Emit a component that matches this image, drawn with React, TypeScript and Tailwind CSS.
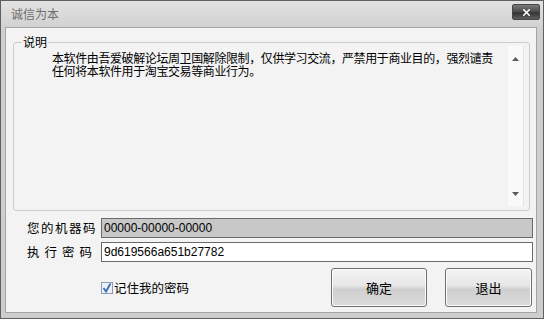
import { X } from 'lucide-react'

const cjk = { fontFamily: '"Noto Sans CJK SC", "Noto Sans", sans-serif' }

function Arrow({ up }: { up?: boolean }) {
  return (
    <svg width="7" height="4" viewBox="0 0 7 4">
      <polygon points={up ? '0,4 7,4 3.5,0' : '0,0 7,0 3.5,4'} fill="#5a5a5a" />
    </svg>
  )
}

function Button({ label, w }: { label: string; w: string }) {
  return (
    <button
      className={`${w} h-[39px] rounded-[3px] border border-[#707070] bg-[linear-gradient(#f4f4f4_0%,#e6e6e6_45%,#cfcfcf_55%,#dcdcdc_100%)] text-[13px] text-black shadow-[inset_0_0_0_1px_#fbfbfb]`}
    >
      {label}
    </button>
  )
}

export default function App() {
  return (
    <div
      className="w-[544px] h-[319px] flex flex-col border border-[#5f5f5f] bg-[linear-gradient(#e2e2e2,#cfcfcf_30px,#cdcdcd)] text-[12px] text-black"
      style={cjk}
    >
      <div className="h-[26px] flex items-start justify-between">
        <span className="pl-[10px] pt-[6px] leading-[14px] text-[12px] text-[#6f6f6f]">诚信为本</span>
        <div className="mt-[3px] mr-[3px] w-[28px] h-[16px] flex items-center justify-center rounded-[2px] border border-[#474747] bg-[linear-gradient(#7a7a7a,#4a4a4a_50%,#333_55%,#5e5e5e)]">
          <X className="w-[11px] h-[11px] text-white" strokeWidth={3.5} />
        </div>
      </div>

      <div className="flex-1 ml-[4px] mr-[6px] mb-[5px] flex flex-col border border-[#a5a5a5] bg-[#f3f3f3]">
        <div className="relative mt-[14px] ml-[7px] mr-[6px] h-[169px] flex border border-[#cccccc] rounded-[3px] pt-[3px] pb-[4px] pr-[5px]">
          <span className="absolute left-[8px] -top-[8px] px-[1px] leading-[14px] text-[12px] bg-[#f3f3f3]">说明</span>
          <p className="flex-1 pl-[38px] pt-[5px] leading-[13px] whitespace-nowrap text-[12px] tracking-[-0.4px]">
            本软件由吾爱破解论坛周卫国解除限制，仅供学习交流，严禁用于商业目的，强烈谴责
            <br />
            任何将本软件用于淘宝交易等商业行为。
          </p>
          <div className="w-[16px] flex flex-col items-center justify-between bg-[#f9f9f9] border-r border-[#e4e4e4] pt-[11px] pb-[10px]">
            <Arrow up />
            <Arrow />
          </div>
        </div>

        <div className="mt-[7px] flex items-center h-[20px]">
          <span className="ml-[21px] w-[74px] tracking-[1.5px] text-[12.5px]">您的机器码</span>
          <div
            className="mr-[3px] flex-1 h-[20px] border border-[#6a6a6a] bg-[#c8c8c8] px-[2px] leading-[18px] text-[12px]"
            style={{ fontFamily: '"Liberation Sans", sans-serif' }}
          >
            00000-00000-00000
          </div>
        </div>

        <div className="mt-[4px] flex items-center h-[20px]">
          <span className="ml-[21px] w-[65px] flex justify-between text-[12.5px]">
            <span>执</span>
            <span>行</span>
            <span>密</span>
            <span>码</span>
          </span>
          <div
            className="ml-[9px] mr-[3px] flex-1 h-[20px] border border-[#6a6a6a] bg-white px-[2px] leading-[18px] text-[12px]"
            style={{ fontFamily: '"Liberation Sans", sans-serif' }}
          >
            9d619566a651b27782
          </div>
        </div>

        <div className="mt-[6px] flex items-center h-[39px]">
          <div className="ml-[95px] flex items-center gap-[1px] pt-[1px]">
            <svg width="12" height="12" viewBox="0 0 12 12">
              <rect x="0.5" y="0.5" width="11" height="11" fill="#eef2f8" stroke="#8a9bb5" />
              <path d="M2.5 6 L5 9.5 L9.5 1.5" fill="none" stroke="#3c6bb3" strokeWidth="1.8" />
            </svg>
            <span className="text-[12.5px]">记住我的密码</span>
          </div>
          <div className="ml-auto mr-[4px] flex gap-[18px]">
            <Button label="确定" w="w-[96px]" />
            <Button label="退出" w="w-[87px]" />
          </div>
        </div>
      </div>
    </div>
  )
}
